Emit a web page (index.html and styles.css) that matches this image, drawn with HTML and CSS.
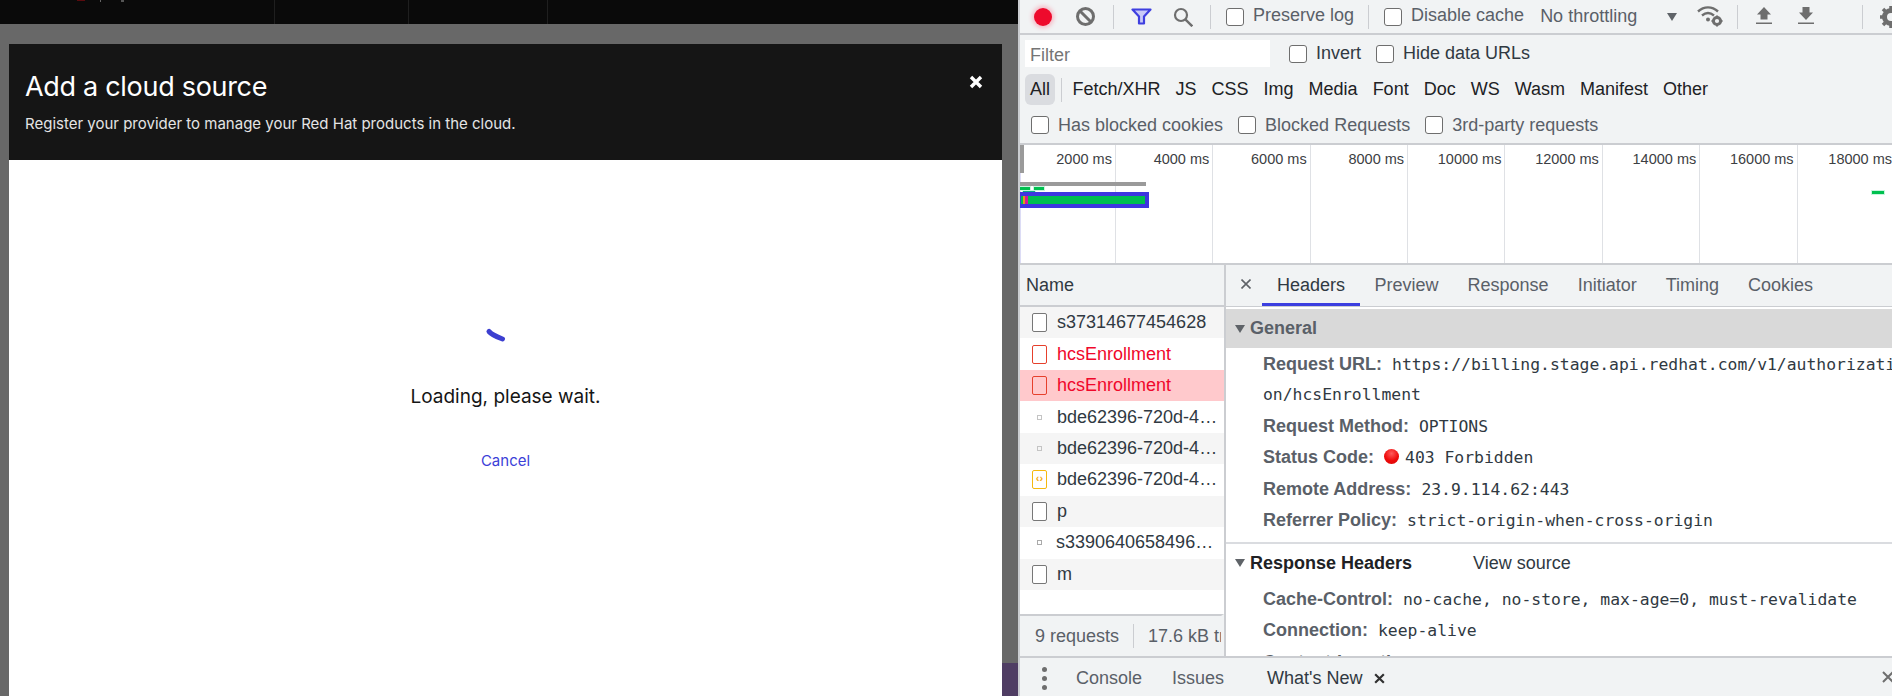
FILE: index.html
```html
<!DOCTYPE html>
<html lang="en">
<head>
<meta charset="utf-8">
<title>Add a cloud source</title>
<link rel="stylesheet" href="styles.css">
</head>
<body>
<div class="page">
  <section class="app">
    <div class="masthead">
      <span class="mh-brand"></span><span class="mh-bar"></span><span class="mh-y"></span>
      <span class="mh-cell c1"></span><span class="mh-cell c2"></span><span class="mh-cell c3"></span>
    </div>
    <div class="backdrop">
      <div class="modal">
        <header class="modal-head">
          <h1>Add a cloud source</h1>
          <p>Register your provider to manage your Red Hat products in the cloud.</p>
          <svg class="modal-close" viewBox="0 0 14 14" width="14" height="14"><path d="M2 2l10 10M12 2L2 12" stroke="#fff" stroke-width="3.400"/></svg>
        </header>
        <div class="modal-body">
          <svg class="spinner" viewBox="0 0 44 20" width="44" height="20"><path d="M5 6.500C8 10 13 12 18.500 14" fill="none" stroke="#3c3fd0" stroke-width="5" stroke-linecap="round"/></svg>
          <div class="loading">Loading, please wait.</div>
          <a class="cancel">Cancel</a>
        </div>
      </div>
      <div class="strip"></div>
    </div>
  </section>
  <section class="devtools">
    <div class="toolbar">
      <span class="rec"></span>
      <svg class="clear" viewBox="0 0 19 19" width="19" height="19"><circle cx="9.500" cy="9.500" r="8" fill="none" stroke="#6e6e6e" stroke-width="3"/><path d="M4 4l11 11" stroke="#6e6e6e" stroke-width="3"/></svg>
      <i class="sep s1"></i>
      <svg class="funnel" viewBox="0 0 21 17" width="21" height="17"><path d="M1.500 1.500h18l-6.500 7v7H8v-7z" fill="#c9caf8" stroke="#3f3fe0" stroke-width="2.200" stroke-linejoin="round"/></svg>
      <svg class="search" viewBox="0 0 20 20" width="20" height="20"><circle cx="8" cy="8" r="6" fill="none" stroke="#6e6e6e" stroke-width="2.200"/><path d="M12.300 12.300l7 7" stroke="#6e6e6e" stroke-width="2.400"/></svg>
      <i class="sep s2"></i>
      <label class="chk t1"><span class="box"></span>Preserve log</label>
      <i class="sep s3"></i>
      <label class="chk t2"><span class="box"></span>Disable cache</label>
      <span class="throttle">No throttling</span>
      <span class="caret"></span>
      <svg class="wifi" viewBox="0 0 26 21" width="26" height="21"><path d="M1 5.500c6-5.500 14-5.500 20 0M5 9.500c4-3.200 8-3.200 12 0" fill="none" stroke="#6e6e6e" stroke-width="2.400"/><circle cx="11" cy="13.500" r="2" fill="#6e6e6e"/><circle cx="20" cy="15" r="3.600" fill="none" stroke="#6e6e6e" stroke-width="3"/><path d="M20 9.500v2M20 18.500v2M14.500 15h2M23.500 15h2" stroke="#6e6e6e" stroke-width="2"/></svg>
      <i class="sep s4"></i>
      <svg class="up" viewBox="0 0 16 17" width="16" height="17"><path d="M8 0l7 7.500h-3.500v5h-7v-5H1zM0 15.500h16V17H0z" fill="#6e6e6e"/></svg>
      <svg class="down" viewBox="0 0 16 17" width="16" height="17"><path d="M4.500 0h7v5.500H15L8 13 1 5.500h3.500zM0 15.500h16V17H0z" fill="#6e6e6e"/></svg>
      <i class="sep s5"></i>
      <svg class="gear" viewBox="0 0 24 24" width="24" height="24"><circle cx="12" cy="12" r="6.500" fill="none" stroke="#6e6e6e" stroke-width="5"/><path d="M12 1v5M12 18v5M1 12h5M18 12h5M4 4l4 4M16 16l4 4M20 4l-4 4M8 16l-4 4" stroke="#6e6e6e" stroke-width="3.500"/></svg>
    </div>
    <div class="filter-row">
      <div class="filter-input">Filter</div>
      <label class="chk"><span class="box"></span>Invert</label>
      <label class="chk"><span class="box"></span>Hide data URLs</label>
    </div>
    <div class="types">
      <span class="type all">All</span><i class="type-sep"></i>
      <span class="type">Fetch/XHR</span><span class="type">JS</span><span class="type">CSS</span><span class="type">Img</span><span class="type">Media</span><span class="type">Font</span><span class="type">Doc</span><span class="type">WS</span><span class="type">Wasm</span><span class="type">Manifest</span><span class="type">Other</span>
    </div>
    <div class="blocked">
      <label class="chk"><span class="box"></span>Has blocked cookies</label>
      <label class="chk"><span class="box"></span>Blocked Requests</label>
      <label class="chk"><span class="box"></span>3rd-party requests</label>
    </div>
    <div class="overview">
      <div class="ov-cols">
        <div class="ov-col"><span>2000 ms</span></div>
        <div class="ov-col"><span>4000 ms</span></div>
        <div class="ov-col"><span>6000 ms</span></div>
        <div class="ov-col"><span>8000 ms</span></div>
        <div class="ov-col"><span>10000 ms</span></div>
        <div class="ov-col"><span>12000 ms</span></div>
        <div class="ov-col"><span>14000 ms</span></div>
        <div class="ov-col"><span>16000 ms</span></div>
        <div class="ov-col last"><span>18000 ms</span></div>
      </div>
      <i class="ov-handle"></i>
      <i class="ov-gray"></i>
      <i class="ov-g a"></i><i class="ov-g b"></i><i class="ov-g c"></i><i class="ov-g d"></i>
      <div class="ov-main"><i class="ov-orange"></i><i class="ov-red"></i></div>
    </div>
    <div class="split">
      <div class="names">
        <div class="names-head">Name</div>
        <div class="name-list">
          <div class="nrow alt"><span class="doc"></span><span class="nm">s37314677454628</span></div>
          <div class="nrow err"><span class="doc red"></span><span class="nm">hcsEnrollment</span></div>
          <div class="nrow err sel"><span class="doc red"></span><span class="nm">hcsEnrollment</span></div>
          <div class="nrow"><span class="dot"></span><span class="nm">bde62396-720d-4…</span></div>
          <div class="nrow alt"><span class="dot"></span><span class="nm">bde62396-720d-4…</span></div>
          <div class="nrow"><span class="doc script">‹›</span><span class="nm">bde62396-720d-4…</span></div>
          <div class="nrow alt"><span class="doc"></span><span class="nm">p</span></div>
          <div class="nrow"><span class="dot big"></span><span class="nm">s3390640658496…</span></div>
          <div class="nrow alt"><span class="doc"></span><span class="nm">m</span></div>
        </div>
        <div class="status-bar"><span class="req">9 requests</span><span class="trans">17.6 kB transferred</span></div>
      </div>
      <div class="details">
        <div class="tabs">
          <span class="tab-x"><svg viewBox="0 0 10 10" width="10" height="10"><path d="M.5.500l9 9M9.500.500l-9 9" stroke="#5f6368" stroke-width="1.600"/></svg></span>
          <span class="tab on">Headers</span><span class="tab">Preview</span><span class="tab">Response</span><span class="tab">Initiator</span><span class="tab">Timing</span><span class="tab">Cookies</span>
        </div>
        <div class="panel">
          <div class="sec-general"><i class="tri"></i>General</div>
          <div class="kv url"><b>Request URL:</b><code>https://billing.stage.api.redhat.com/v1/authorizati</code></div>
          <div class="kv cont"><code>on/hcsEnrollment</code></div>
          <div class="kv"><b>Request Method:</b><code>OPTIONS</code></div>
          <div class="kv"><b>Status Code:</b><i class="led"></i><code>403 Forbidden</code></div>
          <div class="kv"><b>Remote Address:</b><code>23.9.114.62:443</code></div>
          <div class="kv"><b>Referrer Policy:</b><code>strict-origin-when-cross-origin</code></div>
          <div class="sec-resp"><i class="tri"></i><b>Response Headers</b><span>View source</span></div>
          <div class="kv"><b>Cache-Control:</b><code>no-cache, no-store, max-age=0, must-revalidate</code></div>
          <div class="kv"><b>Connection:</b><code>keep-alive</code></div>
          <div class="kv"><b>Content-Length:</b><code>39</code></div>
        </div>
      </div>
    </div>
    <div class="drawer">
      <span class="dots"><i></i><i></i><i></i></span>
      <span class="dtab">Console</span><span class="dtab">Issues</span><span class="dtab cur">What's New</span>
      <svg class="dx" viewBox="0 0 12 12" width="13" height="13"><path d="M2 2l8 8M10 2l-8 8" stroke="#303030" stroke-width="2"/></svg>
      <svg class="dx2" viewBox="0 0 14 14" width="14" height="14"><path d="M2 2l10 10M12 2L2 12" stroke="#6e6e6e" stroke-width="2"/></svg>
    </div>
  </section>
</div>
</body>
</html>
```
FILE: styles.css
```css
* { box-sizing: border-box; }
html, body { margin: 0; height: 100%; overflow: hidden; background: #fff; }
.page { display: flex; width: 1892px; height: 696px; overflow: hidden; font-family: "Liberation Sans", Arial, sans-serif; }

/* left application */
.app { width: 1018px; flex: none; display: flex; flex-direction: column; background: #666; }
.masthead { height: 24px; flex: none; background: #0a0a0a; position: relative; }
.mh-brand { position: absolute; left: 77px; top: 0; width: 8px; height: 1px; background: #5a0b0e; }
.mh-bar { position: absolute; left: 100px; top: 0; width: 1px; height: 2px; background: #666; }
.mh-y { position: absolute; left: 121px; top: 0; width: 3px; height: 2px; background: #555; }
.mh-cell { position: absolute; top: 0; bottom: 0; width: 1px; background: #1f1f1f; }
.c1 { left: 274px; } .c2 { left: 408px; } .c3 { left: 547px; }
.backdrop { flex: 1; display: flex; padding: 20px 0 0 9px; position: relative; background: #686868; min-height: 0; }
.modal { width: 993px; display: flex; flex-direction: column; background: #fff; }
.modal-head { height: 116px; flex: none; background: #151515; color: #fff; padding: 25px 16px 0; position: relative; font-family: "Inter", "Open Sans", sans-serif; }
.modal-head h1 { margin: 0; font-size: 27px; line-height: 36px; font-weight: 400; letter-spacing: -0.3px; }
.modal-head p { margin: 9px 0 0; font-size: 15px; line-height: 20px; color: #e4e4e4; }
.modal-close { position: absolute; right: 19px; top: 31px; }
.modal-body { flex: 1; display: flex; flex-direction: column; align-items: center; font-family: "Inter", "Open Sans", sans-serif; }
.spinner { margin-top: 165px; }
.loading { margin-top: 38px; font-size: 19px; line-height: 28px; color: #151515; }
.cancel { margin-top: 40px; font-size: 15px; line-height: 20px; color: #3c3fd8; }
.strip { position: absolute; right: 0; bottom: 0; width: 16px; height: 33px; background: #4f3d63; }

/* devtools */
.devtools { flex: 1; min-width: 0; display: flex; flex-direction: column; background: #f1f3f4; border-left: 2px solid #cbcdd1; font-size: 18px; color: #303942; }
.toolbar { height: 35px; flex: none; display: flex; align-items: center; border-bottom: 2px solid #cbcdd1; padding-left: 14px; white-space: nowrap; overflow: hidden; }
.toolbar svg { flex: none; }
.rec { width: 18px; height: 18px; flex: none; border-radius: 50%; background: #ee0a2c; box-shadow: 0 0 4px 2px #f5b9c4; }
.clear { margin-left: 24px; }
.sep { width: 1px; height: 24px; background: #cbcdd1; flex: none; }
.s1 { margin-left: 18px; }
.funnel { margin-left: 17px; }
.search { margin-left: 21px; }
.s2 { margin-left: 17px; }
.chk { display: inline-flex; align-items: center; color: #5a6068; white-space: nowrap; }
.box { width: 18px; height: 18px; flex: none; margin-right: 9px; background: #fff; border: 1.5px solid #6e6e6e; border-radius: 3px; }
.t1 { margin-left: 15px; padding-bottom: 3px; }
.t2 { margin-left: 15px; padding-bottom: 3px; }
.t1 .box, .t2 .box { margin-top: 3px; }
.s3 { margin-left: 14px; }
.throttle { margin-left: 16px; color: #5a6068; }
.caret { margin-left: 30px; width: 0; height: 0; flex: none; border: solid transparent; border-width: 8px 5px 0; border-top-color: #5f6368; }
.wifi { margin-left: 20px; }
.s4 { margin-left: 14px; }
.up { margin-left: 18px; margin-bottom: 2px; }
.down { margin-left: 26px; margin-bottom: 2px; }
.s5 { margin-left: 48px; }
.gear { margin-left: 16px; }

.filter-row { height: 39px; flex: none; display: flex; align-items: center; gap: 15px; padding: 0 0 2px 5px; }
.filter-row .chk { color: #303942; }
.filter-input { width: 245px; height: 27px; background: #fff; color: #757575; padding-left: 5px; line-height: 30px; margin-right: 4px; }
.types { height: 31px; flex: none; display: flex; align-items: center; padding-left: 5px; }
.type { padding: 0 7.500px; color: #202124; line-height: 31px; white-space: nowrap; }
.type.all { padding: 0 5px; background: #dadce0; border-radius: 6px; margin-right: 6px; }
.type-sep { width: 1px; height: 24px; background: #cbcdd1; margin-right: 3px; }
.blocked { height: 40px; flex: none; display: flex; align-items: center; gap: 15px; padding: 2px 0 0 11px; border-bottom: 2px solid #cbcdd1; }

.overview { height: 120px; flex: none; position: relative; background: #fff; border-bottom: 2px solid #cbcdd1; overflow: hidden; box-shadow: inset 1px 0 #dcdcf5; }
.ov-cols { display: flex; height: 100%; margin-left: -1.500px; }
.ov-col { width: 97.400px; flex: none; border-right: 1px solid #dfe1e5; text-align: right; padding: 4px 3px 0 0; font-size: 14.500px; line-height: 20px; color: #3c4043; white-space: nowrap; }
.ov-col.last { border-right: 0; }
.ov-handle { position: absolute; left: 0; top: 0; width: 4px; height: 28px; background: #9a9a9a; }
.ov-gray { position: absolute; left: 0; top: 37px; width: 126px; height: 4px; background: #9a9a9a; }
.ov-g { position: absolute; height: 3px; background: #00c04f; box-shadow: 0 0 0 1px #c8f5df; }
.ov-g.a { left: 0; top: 42px; width: 10px; }
.ov-g.b { left: 14px; top: 42px; width: 10px; }
.ov-g.c { left: 3px; top: 46px; width: 12px; background: #0aa88a; }
.ov-g.d { left: 852px; top: 46px; width: 12px; }
.ov-main { position: absolute; left: 0; top: 47px; width: 129px; height: 16px; background: #00bd50; border: solid #3e35e0; border-width: 4px 4px 4px 1px; }
.ov-orange { position: absolute; left: 2px; top: 0; width: 2px; height: 100%; background: #e09a1a; }
.ov-red { position: absolute; left: 4px; top: 0; width: 3px; height: 100%; background: #d8159a; }

.split { flex: 1; min-height: 0; display: flex; }
.names { width: 206px; flex: none; display: flex; flex-direction: column; border-right: 2px solid #cbcdd1; background: #fff; }
.names-head { height: 42px; flex: none; background: #f1f3f4; border-bottom: 2px solid #cbcdd1; padding-left: 6px; line-height: 40px; color: #303942; }
.name-list { flex: 1; min-height: 0; }
.nrow { height: 31.450px; display: flex; align-items: center; white-space: nowrap; color: #303942; }
.nrow.alt { background: #f5f5f5; }
.nrow.err { color: #f0072b; }
.nrow.sel { background: #ffc9cc; }
.doc { width: 15px; height: 19px; flex: none; margin: 0 10px 0 12px; background: #fff; border: 1.5px solid #777; border-radius: 2px; }
.doc.red { border-color: #e6402c; background: transparent; }
.doc.script { border-color: #f5b90f; color: #f5a90f; font-size: 11px; font-weight: 700; line-height: 15px; text-align: center; }
.dot { width: 3px; height: 3px; flex: none; margin: 0 15px 0 17px; border: 1px solid #c4c4c4; box-sizing: content-box; }
.dot.big { border: 1.500px solid #aaa; margin-right: 14px; }
.status-bar { height: 42px; flex: none; background: #f1f3f4; border-top: 2px solid #cbcdd1; border-right: 3px solid #f1f3f4; display: flex; align-items: center; padding-left: 15px; color: #5a6068; overflow: hidden; white-space: nowrap; width: 204px; }
.req { padding-right: 14px; border-right: 1px solid #cbcdd1; line-height: 24px; flex: none; }
.trans { padding-left: 14px; flex: none; }

.details { flex: 1; min-width: 0; display: flex; flex-direction: column; }
.tabs { height: 42px; flex: none; display: flex; align-items: center; border-bottom: 1px solid #cbcdd1; position: relative; }
.tab-x { width: 36px; flex: none; display: flex; justify-content: center; padding: 0 0 4px 3px; }
.tab { line-height: 40px; height: 41px; padding: 0 14.500px; color: #5a6068; flex: none; }
.tab.on { padding: 0 15px; color: #303942; border-bottom: 3px solid #3c3fe0; }
.panel { flex: 1; min-height: 0; overflow: hidden; background: #fff; padding-top: 2px; }
.sec-general { height: 39px; line-height: 38px; background: #d9d9d9; font-weight: 700; color: #5a6068; padding-left: 24px; position: relative; margin-bottom: 1px; }
.tri { position: absolute; left: 9px; top: 16px; width: 0; height: 0; border: solid transparent; border-width: 8px 5.500px 0; border-top-color: #5f6368; }
.kv { min-height: 31.500px; line-height: 31.500px; padding-left: 37px; white-space: nowrap; display: flex; align-items: center; }
.kv.cont { margin-top: -1.500px; }
.kv b { color: #5a6068; margin-right: 10px; }
.kv code { font-family: "DejaVu Sans Mono", monospace; font-size: 16.400px; color: #303942; }
.led { width: 15px; height: 15px; border-radius: 50%; background: radial-gradient(circle at 50% 30%, #ff5a5a, #ee0a0a 55%, #d80808); margin: -3px 6px 0 0; flex: none; }
.sec-resp { height: 42px; margin-top: 5px; border-top: 2px solid #dadce0; line-height: 38px; padding-left: 24px; position: relative; color: #202124; display: flex; }
.sec-resp .tri { top: 15px; }
.sec-resp b { width: 223px; flex: none; }
.sec-resp span { color: #303942; }

.drawer { height: 40px; flex: none; display: flex; align-items: center; border-top: 2px solid #cbcdd1; position: relative; white-space: nowrap; padding-top: 2px; }
.dots { display: flex; flex-direction: column; gap: 4px; width: 6px; margin: 0 28px 0 22px; flex: none; }
.dots i { width: 5px; height: 5px; border-radius: 50%; background: #6e6e6e; }
.dtab { color: #5a6068; margin-right: 30px; }
.dtab.cur { color: #303942; margin: 0 10px 0 13px; }
.dx { flex: none; }
.dx2 { position: absolute; right: -3px; top: 12px; }
```
